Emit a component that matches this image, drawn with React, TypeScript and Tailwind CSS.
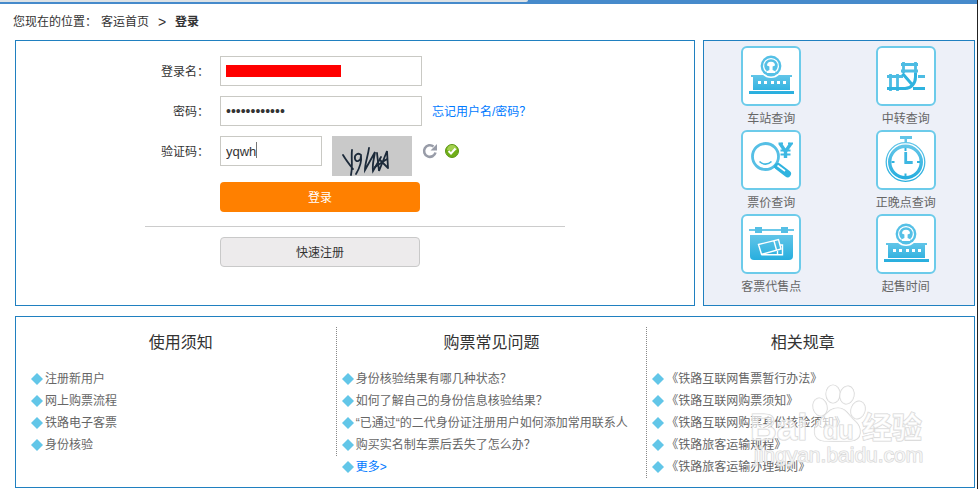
import { useState } from 'react'
import type { ReactNode } from 'react'

interface QueryEntry {
  label: string
  icon: ReactNode
}

interface NoticeColumn {
  title: string
  items: string[]
  more?: boolean
}

const fill = 'url(#iconFill)'

function StationIcon() {
  return (
    <svg viewBox="2 2 56 56" className="block size-full" aria-hidden="true">
      <path fill={fill} d="M10 29h41v2h-2v13H12V31h-2zM8 45h45v3H8z" />
      <path fill="#fff" d="M17 35h3v3h-3zM23 35h3v3h-3zM30 35h3v3h-3zM36 35h3v3h-3zM42 35h3v3h-3z" />
      <circle cx="30" cy="20" r="12" fill="#fff" />
      <circle cx="30" cy="20" r="10.4" fill="#55c0e6" />
      <path fill="none" stroke="#fff" strokeWidth="1.3" d="M25.500 25.800a7.400 7.400 0 1 1 9 0" />
      <path fill="#fff" d="M26 19.500a4 3.800 0 0 1 8 0l-2.400 1v3.500l2.600 1.200V27h-8.400v-1.800l2.600-1.200v-3.500z" />
    </svg>
  )
}

function TransferIcon() {
  return (
    <svg viewBox="2 2 56 56" className="block size-full" aria-hidden="true">
      <g fill="none" stroke="#4dbce3" strokeWidth="2.800">
        <path d="M27.500 16v11M39.500 16v12M25 18.500h17M25 25h17" />
        <path d="M14.500 28v17M21.500 28v17M11 30.500h16M42 30.500h7" />
      </g>
      <g fill="none" stroke="#2fb3df" strokeWidth="3">
        <path d="M11 42.500h19M37 42.500h12" />
        <path d="M26.500 27.500l10 11.500M39.500 27v4c0 6-4 11.500-10.500 11.500" />
      </g>
    </svg>
  )
}

function PriceIcon() {
  return (
    <svg viewBox="2 2 56 56" className="block size-full" aria-hidden="true">
      <circle cx="24.500" cy="26.500" r="13" fill="none" stroke="#55bfe5" strokeWidth="2.800" />
      <path d="M18.500 31.500c3.500 3.500 8.500 3.500 12 0" fill="none" stroke="#3fb8e1" strokeWidth="1.600" />
      <path d="M33.500 35.500l3 2" stroke="#2fb3df" strokeWidth="4" />
      <path d="M37 36.500l9.500 7.300" stroke="#2fb3df" strokeWidth="7" strokeLinecap="round" />
      <path d="M36.500 35.500l7.500 5.500" stroke="#fff" strokeWidth="1.600" />
      <path d="M39 13.500l5.500 8 5.500-8M44.500 21v7" fill="none" stroke="#3db7e2" strokeWidth="3.400" />
      <path d="M39.500 20.500h10M39.500 24.500h10M37.500 13.500h4.500M47 13.500h5" stroke="#3db7e2" strokeWidth="1.800" />
    </svg>
  )
}

function ClockIcon() {
  return (
    <svg viewBox="2 2 56 56" className="block size-full" aria-hidden="true">
      <path fill="#62c5e8" d="M24 6h12v3h-5v4h-2.500V9H24z" />
      <circle cx="29.500" cy="32" r="19.300" fill="none" stroke={fill} strokeWidth="1.300" />
      <circle cx="29.500" cy="32" r="15.800" fill="none" stroke={fill} strokeWidth="3.400" />
      <path d="M29.500 18v3M29.500 43.500v3M15.500 32h3M41 32h3" stroke="#2fb3df" strokeWidth="2" />
      <path d="M29.700 22v11.500M28.400 32.500h8.300" fill="none" stroke="#3db7e2" strokeWidth="2.800" />
    </svg>
  )
}

function AgencyIcon() {
  return (
    <svg viewBox="2 2 56 56" className="block size-full" aria-hidden="true">
      <path fill="#6bc8e9" d="M8 15h45v2H8z" />
      <path fill="#55bfe5" d="M14 13h7v6h-7zM40 13h7v6h-7z" />
      <path fill={fill} d="M9 21h43v21a4 4 0 0 1-4 4H13a4 4 0 0 1-4-4z" />
      <g fill="none" stroke="#fff" strokeWidth="1.400">
        <path d="M17.500 30.500l20-5 2.500 9.500-19.500 5.300zM33 27l2.500 9" />
        <path d="M39 31h2.500v9.800h-21M36.500 37v3.500" />
      </g>
    </svg>
  )
}

const queries: QueryEntry[] = [
  { label: '车站查询', icon: <StationIcon /> },
  { label: '中转查询', icon: <TransferIcon /> },
  { label: '票价查询', icon: <PriceIcon /> },
  { label: '正晚点查询', icon: <ClockIcon /> },
  { label: '客票代售点', icon: <AgencyIcon /> },
  { label: '起售时间', icon: <StationIcon /> },
]

const notices: NoticeColumn[] = [
  { title: '使用须知', items: ['注册新用户', '网上购票流程', '铁路电子客票', '身份核验'] },
  {
    title: '购票常见问题',
    items: [
      '身份核验结果有哪几种状态？',
      '如何了解自己的身份信息核验结果？',
      '“已通过“的二代身份证注册用户如何添加常用联系人',
      '购买实名制车票后丢失了怎么办？',
    ],
    more: true,
  },
  {
    title: '相关规章',
    items: [
      '《铁路互联网售票暂行办法》',
      '《铁路互联网购票须知》',
      '《铁路互联网购票身份核验须知》',
      '《铁路旅客运输规程》',
      '《铁路旅客运输办理细则》',
    ],
  },
]

function Diamond() {
  return (
    <svg viewBox="0 0 12 12" className="size-3 shrink-0" aria-hidden="true">
      <path fill="#62c6e8" d="M6 0l6 6-6 6-6-6z" />
    </svg>
  )
}

function Captcha() {
  return (
    <svg viewBox="0 0 80 40" className="h-10 w-20 shrink-0 bg-[#c9c9c9]" role="img" aria-label="验证码图片">
      <g fill="none" stroke="#1c2a3a" strokeWidth="1.800" strokeLinecap="round">
        <path d="M11 19c3 5 6 9 10 14M20 14c-1 8 1 16-1 25" />
        <path d="M29 19c-3-3-7 0-6 4s6 2 6-3c1 7-2 13-5 18" />
        <path d="M37 12c-1 8-4 15-4 22l10-18c-1 7-3 12-2 19l8-14" />
        <path d="M45 17l2 18 8-20 1 17M43 31l12-8M48 24l8 8" />
      </g>
    </svg>
  )
}

function Watermark() {
  return (
    <svg viewBox="0 0 180 90" className="pointer-events-none absolute right-12 bottom-4 h-[90px] w-[180px]" aria-hidden="true">
      <g fill="#fff" fillOpacity="0.650" stroke="#d6d6d6" strokeWidth="1.200" paintOrder="stroke">
        <ellipse cx="74" cy="26" rx="7" ry="9" transform="rotate(-15 74 26)" />
        <ellipse cx="87" cy="13" rx="7" ry="9" />
        <ellipse cx="101" cy="14" rx="7" ry="9" transform="rotate(12 101 14)" />
        <ellipse cx="112" cy="29" rx="7" ry="9" transform="rotate(20 112 29)" />
        <path d="M92 27c8 0 11 8 17 13 7 6 8 19-4 20-8 1-17 0-27 0-12-1-12-14-4-21 6-5 9-12 18-12z" />
        <g className="font-['Liberation_Sans',sans-serif] font-bold">
          <text x="4" y="59" fontSize="37">Bai</text>
          <text x="77" y="58" fontSize="25">du</text>
        </g>
        <text x="116" y="57" fontSize="30" className="font-['Noto_Sans_CJK_SC',sans-serif] font-bold">经验</text>
        <text x="8" y="81" fontSize="21" className="font-['Liberation_Sans',sans-serif]">jingyan.baidu.com</text>
      </g>
    </svg>
  )
}

const fieldClass = "h-[30px] border border-[#c9c9c4] bg-white px-[5px] font-['Liberation_Sans',sans-serif] text-[#333] outline-none"
const labelClass = 'pt-[2px] text-right leading-[28px]'

function LoginForm() {
  const [name, setName] = useState('')
  const [password, setPassword] = useState('abcdefghijkl')
  const [code, setCode] = useState('yqwh')

  return (
    <form
      className="min-w-0 flex-1 border border-[#2080c0] pt-[15px]"
      onSubmit={e => e.preventDefault()}
    >
      <div className="grid grid-cols-[193px_1fr] gap-x-[11px] gap-y-[10px]">
        <label htmlFor="name" className={labelClass}>登录名：</label>
        <div className="relative">
          <input id="name" value={name} onChange={e => setName(e.target.value)} className={`${fieldClass} w-[202px] text-sm`} />
          <span className="absolute top-[9px] left-[6px] h-3 w-[115px] bg-[#ff0000]" />
        </div>

        <label htmlFor="password" className={labelClass}>密码：</label>
        <div className="flex items-center gap-[10px]">
          <input id="password" type="password" value={password} onChange={e => setPassword(e.target.value)} className={`${fieldClass} w-[202px] text-sm`} />
          <a href="#forgot" className="pt-[2px] text-[#007aff]">忘记用户名/密码？</a>
        </div>

        <label htmlFor="code" className={labelClass}>验证码：</label>
        <div className="flex items-start">
          <div className="relative mr-[10px]">
            <input id="code" value={code} onChange={e => setCode(e.target.value)} className={`${fieldClass} w-[102px] text-[13px]`} />
            <span className="absolute top-[6px] left-9 h-4 w-px bg-[#777]" />
          </div>
          <Captcha />
          <div className="ml-[10px] flex h-[30px] items-center gap-[7px]">
            <button type="button" aria-label="刷新验证码">
              <svg viewBox="0 0 16 16" className="block size-4">
                <path d="M13.500 9.500a5.800 5.800 0 1 1-2-6" fill="none" stroke="#989ca8" strokeWidth="2.600" />
                <path d="M15 1v6.500H8.500z" fill="#989ca8" />
              </svg>
            </button>
            <svg viewBox="0 0 14 14" className="block size-[14px]" role="img" aria-label="验证通过">
              <circle cx="7" cy="7" r="6.500" fill="#6fae18" stroke="#5c9614" />
              <path d="M2 6a5 5 0 0 1 10 0c-3 1-7 1-10 0z" fill="#a3d04f" />
              <path d="M3.500 7l2.500 2.500L10.500 4.500" fill="none" stroke="#fff" strokeWidth="2" />
            </svg>
          </div>
        </div>
      </div>

      <button type="submit" className="mt-[6px] ml-[204px] block h-[30px] w-[200px] rounded bg-[#ff8000] pt-[2px] text-white">登录</button>
      <hr className="mt-[14px] ml-[129px] w-[420px] border-[#ccc]" />
      <button type="button" className="mt-[10px] ml-[204px] block h-[30px] w-[200px] rounded border border-[#c9c9c9] bg-[#edebec] pt-[2px]">快速注册</button>
    </form>
  )
}

function QueryPanel() {
  return (
    <nav className="grid w-[272px] grid-cols-2 border border-[#2080c0] bg-[#edf0f8] pt-[5px] pr-px pb-[7px]">
      {queries.map(q => (
        <a key={q.label} href="#query" className="flex flex-col items-center text-[#666]">
          <span className="size-[60px] rounded-md border-2 border-[#6ccbea] bg-white">{q.icon}</span>
          <span className="pt-[2px] leading-[22px]">{q.label}</span>
        </a>
      ))}
    </nav>
  )
}

function Notices() {
  return (
    <section className="relative mt-[10px] border border-[#2080c0] pt-[10px] pr-4 pb-[9px] pl-[10px]">
      <div className="grid grid-cols-3 items-start">
        {notices.map(col => (
          <div key={col.title} className="border-r border-dotted border-[#888] last:border-r-0">
            <h2 className="pt-px text-center text-base leading-[30px]">{col.title}</h2>
            <ul className="mt-[10px] pl-[5px] leading-[22px] text-[#666]">
              {col.items.map(item => (
                <li key={item} className="flex items-center gap-[2px] whitespace-nowrap">
                  <Diamond />
                  <a href="#notice">{item}</a>
                </li>
              ))}
              {col.more && (
                <li className="flex items-center gap-[2px]">
                  <Diamond />
                  <a href="#more" className="text-[#007aff]">更多&gt;</a>
                </li>
              )}
            </ul>
          </div>
        ))}
      </div>
      <Watermark />
    </section>
  )
}

export default function App() {
  return (
    <div className="border-r border-[#222] bg-white font-['Liberation_Sans','Noto_Sans_CJK_SC',sans-serif] text-xs text-[#333]">
      <svg className="absolute size-0" aria-hidden="true">
        <defs>
          <linearGradient id="iconFill" x1="0" y1="0" x2="0" y2="1">
            <stop offset="0" stopColor="#62c5e8" />
            <stop offset="1" stopColor="#27aede" />
          </linearGradient>
        </defs>
      </svg>
      <div className="h-1 bg-[#468acb]">
        <div className="h-[2px] w-[54%] rounded-br-full bg-[#dde2e6]" />
      </div>
      <div className="pr-[2px] pb-px pl-[15px]">
        <div className="-ml-[2px] flex h-9 items-center gap-2">
          <span className="flex gap-1">
            您现在的位置：
            <a href="#home">客运首页</a>
          </span>
          <span className="w-[10px] text-center text-sm">&gt;</span>
          <b>登录</b>
        </div>
        <div className="flex gap-2">
          <LoginForm />
          <QueryPanel />
        </div>
        <Notices />
      </div>
    </div>
  )
}
